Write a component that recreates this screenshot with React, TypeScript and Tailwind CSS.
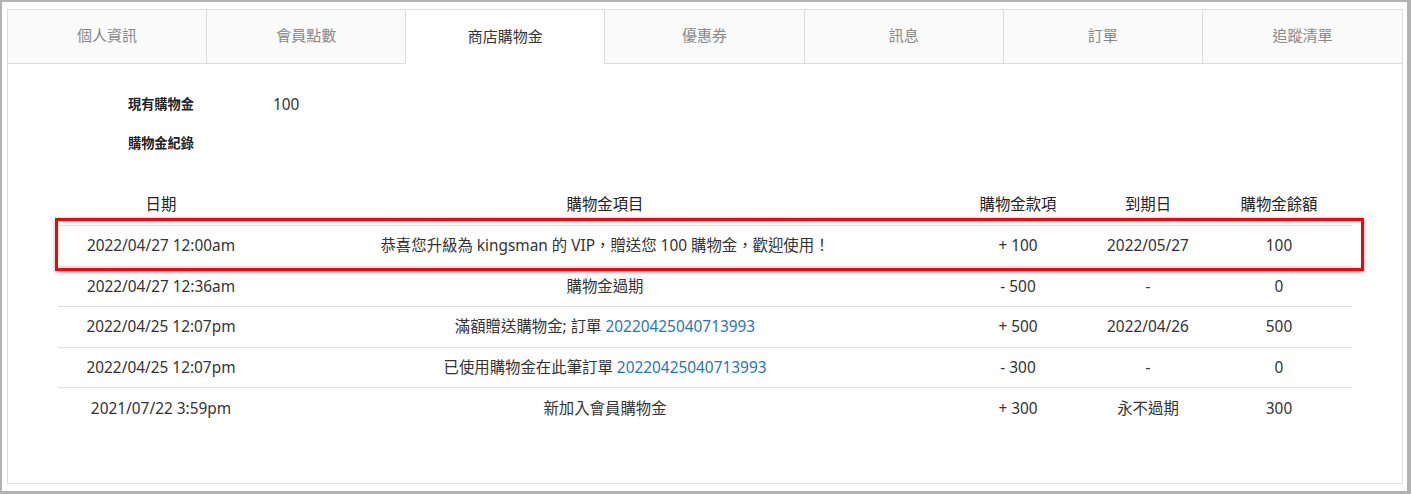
import React from 'react';

const tabs = ['個人資訊', '會員點數', '商店購物金', '優惠券', '訊息', '訂單', '追蹤清單'];
const activeTab = 2;

type Row = {
  date: string;
  item: string;
  order?: string;
  amount: string;
  expiry: string;
  balance: string;
};

const rows: Row[] = [
  { date: '2022/04/27 12:00am', item: '恭喜您升級為 kingsman 的 VIP，贈送您 100 購物金，歡迎使用！', amount: '+ 100', expiry: '2022/05/27', balance: '100' },
  { date: '2022/04/27 12:36am', item: '購物金過期', amount: '- 500', expiry: '-', balance: '0' },
  { date: '2022/04/25 12:07pm', item: '滿額贈送購物金; 訂單', order: '20220425040713993', amount: '+ 500', expiry: '2022/04/26', balance: '500' },
  { date: '2022/04/25 12:07pm', item: '已使用購物金在此筆訂單', order: '20220425040713993', amount: '- 300', expiry: '-', balance: '0' },
  { date: '2021/07/22 3:59pm', item: '新加入會員購物金', amount: '+ 300', expiry: '永不過期', balance: '300' },
];

const cols = 'grid grid-cols-[206px_682px_144px_116px_146px]';

export default function App() {
  return (
    <div className="w-[1411px] h-[494px] bg-white border-l-2 border-t-2 border-r-4 border-b-[3px] border-[#b3b3b3] pl-[5px] pt-[7px] pr-[5px] font-['Noto_Sans','Noto_Sans_CJK_TC',sans-serif] text-[#333]">
      <div className="w-[1396px] h-[475px] border border-[#dddddd] bg-white">
        {/* tab bar */}
        <div className="grid grid-cols-7 h-[54px]">
          {tabs.map((t, i) => (
            <div
              key={t}
              className={
                'flex items-center justify-center pb-[2px] text-[15px] ' +
                (i === activeTab
                  ? 'bg-white text-[#333]'
                  : 'bg-[#fafafa] text-[#888] border-b border-[#dddddd]') +
                (i < tabs.length - 1 ? ' border-r border-r-[#dddddd]' : '')
              }
            >
              {t}
            </div>
          ))}
        </div>

        <div className="pt-[21px]">
          <div className="flex items-center h-[39px] pl-[120px]">
            <div className="w-[145px] text-[13.2px] font-bold text-[#222]">現有購物金</div>
            <div className="text-[15.4px]">100</div>
          </div>
          <div className="flex items-center h-[39px] pl-[120px]">
            <div className="w-[145px] text-[13.2px] font-bold text-[#222]">購物金紀錄</div>
          </div>

          {/* history table */}
          <div className="ml-[50px] mt-[22px] w-[1294px] text-[15.4px]">
            <div className={cols + ' h-[40px] items-center text-center text-[#222]'}>
              <div>日期</div>
              <div>購物金項目</div>
              <div>購物金款項</div>
              <div>到期日</div>
              <div>購物金餘額</div>
            </div>
            {rows.map((r, i) => (
              <div key={i} className={cols + ' relative h-[40.6px] items-center text-center border-t border-[#dddddd]'}>
                {i === 0 && (
                  <div className="absolute -left-[3px] -top-[8px] w-[1309px] h-[53px] border-[3px] border-[#ff0000] shadow-[0_1px_4px_rgba(0,0,0,0.3)] pointer-events-none" />
                )}
                <div>{r.date}</div>
                <div>
                  {r.item}
                  {r.order && <span className="text-[#1f76c2]"> {r.order}</span>}
                </div>
                <div>{r.amount}</div>
                <div>{r.expiry}</div>
                <div>{r.balance}</div>
              </div>
            ))}
          </div>
        </div>
      </div>
    </div>
  );
}
